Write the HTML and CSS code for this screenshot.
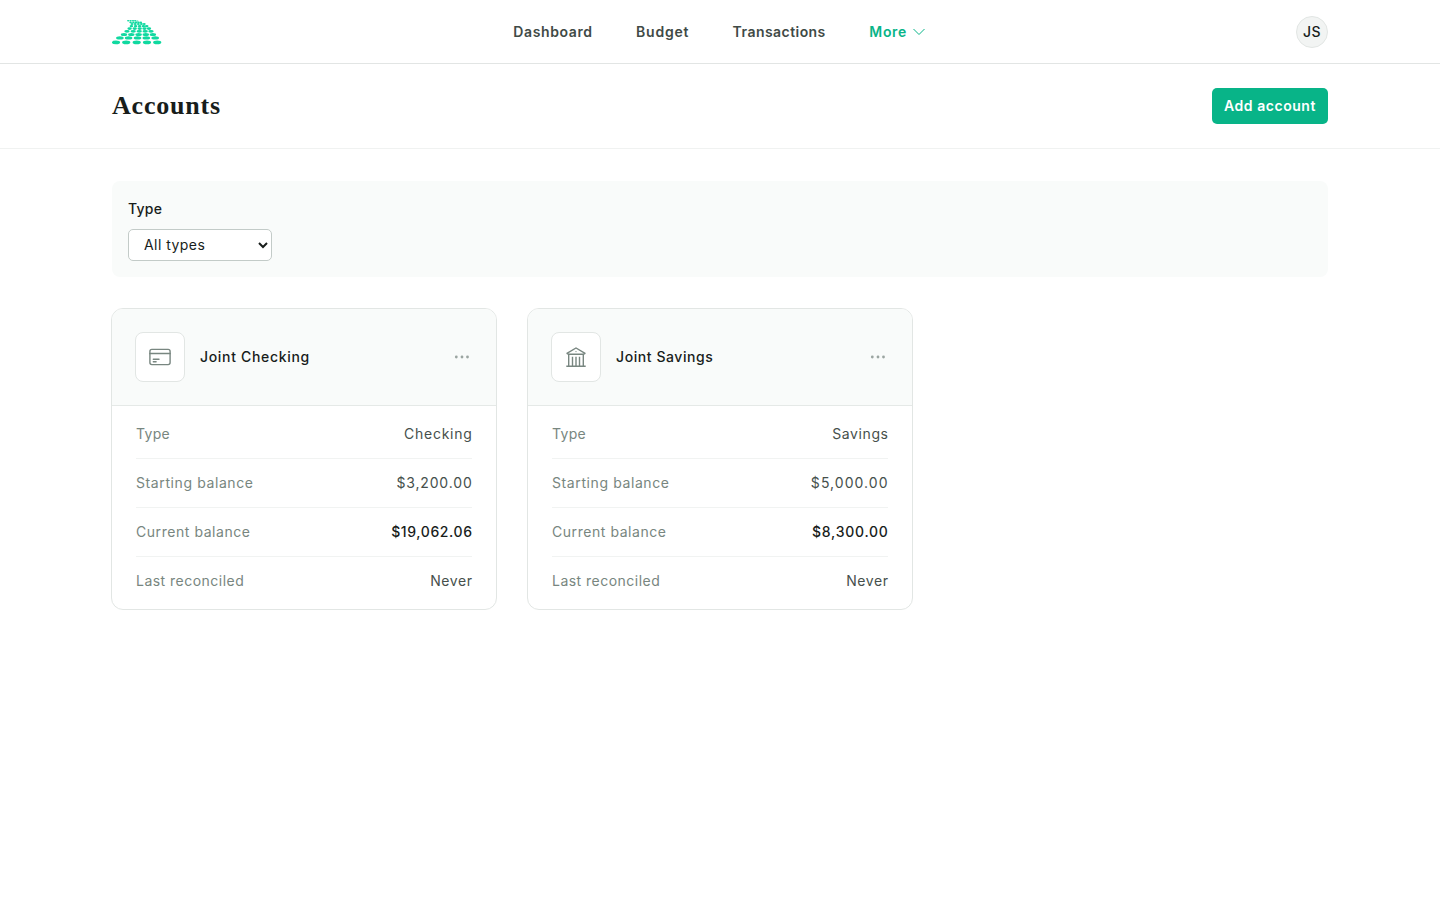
FILE: index.html
```html
<!DOCTYPE html>
<html lang="en">
<head>
<meta charset="utf-8">
<title>Accounts</title>
<link rel="stylesheet" href="styles.css">
</head>
<body>
<header class="topbar">
  <div class="container topbar-inner">
    <a class="logo" aria-label="Home">
      <svg width="50" height="26" viewBox="112 19 50 26" fill="#10d9a0">
        <g><ellipse cx="116" cy="42.4" rx="4.1" ry="1.8"/><ellipse cx="126.2" cy="42.4" rx="4.1" ry="1.8"/><ellipse cx="136.7" cy="42.4" rx="4.1" ry="1.8"/><ellipse cx="147" cy="42.4" rx="4.1" ry="1.8"/><ellipse cx="157.2" cy="42.4" rx="4.1" ry="1.8"/></g>
        <g><ellipse cx="119.9" cy="37.9" rx="3.8" ry="1.6"/><ellipse cx="128.6" cy="37.9" rx="3.8" ry="1.6"/><ellipse cx="137.5" cy="37.9" rx="3.8" ry="1.6"/><ellipse cx="146.3" cy="37.9" rx="3.8" ry="1.6"/><ellipse cx="155.2" cy="37.9" rx="3.8" ry="1.6"/></g>
        <g><ellipse cx="124" cy="34.4" rx="3.2" ry="1.5"/><ellipse cx="131.3" cy="34.4" rx="3.2" ry="1.5"/><ellipse cx="138.6" cy="34.4" rx="3.2" ry="1.5"/><ellipse cx="145.8" cy="34.4" rx="3.2" ry="1.5"/><ellipse cx="152.9" cy="34.4" rx="3.2" ry="1.5"/></g>
        <g><ellipse cx="127" cy="31.3" rx="2.7" ry="1.4"/><ellipse cx="133.2" cy="31.3" rx="2.7" ry="1.4"/><ellipse cx="139.2" cy="31.3" rx="2.7" ry="1.4"/><ellipse cx="145.2" cy="31.3" rx="2.7" ry="1.4"/><ellipse cx="151" cy="31.3" rx="2.7" ry="1.4"/></g>
        <g><ellipse cx="129.6" cy="28.6" rx="2.2" ry="1.3"/><ellipse cx="134.7" cy="28.6" rx="2.2" ry="1.3"/><ellipse cx="139.7" cy="28.6" rx="2.2" ry="1.3"/><ellipse cx="144.5" cy="28.6" rx="2.2" ry="1.3"/><ellipse cx="149" cy="28.6" rx="2.2" ry="1.3"/></g>
        <g><ellipse cx="131.4" cy="26.1" rx="1.8" ry="1.2"/><ellipse cx="135.6" cy="26.1" rx="1.8" ry="1.2"/><ellipse cx="139.6" cy="26.1" rx="1.8" ry="1.2"/><ellipse cx="143.4" cy="26.1" rx="1.8" ry="1.2"/><ellipse cx="146.7" cy="26.1" rx="1.8" ry="1.2"/></g>
        <g><ellipse cx="132" cy="24.1" rx="1.5" ry="1"/><ellipse cx="135.2" cy="24.1" rx="1.5" ry="1"/><ellipse cx="138.4" cy="24.1" rx="1.5" ry="1"/><ellipse cx="141.4" cy="24.1" rx="1.5" ry="1"/><ellipse cx="144.2" cy="24.1" rx="1.5" ry="1"/></g>
        <g><ellipse cx="130.6" cy="22.4" rx="1.3" ry=".8"/><ellipse cx="133.4" cy="22.4" rx="1.3" ry=".8"/><ellipse cx="136" cy="22.4" rx="1.3" ry=".8"/><ellipse cx="138.5" cy="22.4" rx="1.3" ry=".8"/><ellipse cx="140.8" cy="22.4" rx="1.3" ry=".8"/></g>
        <g><ellipse cx="128.2" cy="20.8" rx="1.2" ry=".7"/><ellipse cx="130.6" cy="20.8" rx="1.2" ry=".7"/><ellipse cx="133" cy="20.8" rx="1.2" ry=".7"/><ellipse cx="135.2" cy="20.8" rx="1.2" ry=".7"/><ellipse cx="137.4" cy="21" rx="1.1" ry=".6"/></g>
      </svg>
    </a>
    <nav class="nav">
      <a class="t-dash">Dashboard</a>
      <a class="t-budget">Budget</a>
      <a class="t-trans">Transactions</a>
      <a class="active"><span class="t-more">More</span><svg width="12" height="8" viewBox="0 0 12 8" fill="none" stroke="currentColor" stroke-width="1"><path d="M.5 1 6 6.5 11.5 1"/></svg></a>
    </nav>
    <div class="avatar"><span>JS</span></div>
  </div>
</header>
<section class="heading">
  <div class="container heading-inner">
    <h1>Accounts</h1>
    <button class="add"><span>Add account</span></button>
  </div>
</section>
<main class="container main">
  <div class="filters">
    <label class="filter-label" for="type"><span>Type</span></label>
    <select class="filter-select" id="type"><option>All types</option></select>
  </div>
  <div class="cards">
    <article class="card">
      <div class="card-head">
        <div class="card-icon">
          <svg width="24" height="24" viewBox="0 0 24 24" fill="none" stroke="currentColor" stroke-width="1.4" stroke-linecap="round" stroke-linejoin="round"><rect x="1.9" y="4.4" width="20.2" height="15.2" rx="2"/><path d="M2 8.500h20" stroke-width="1.700"/><path d="M5.300 14.200h5.700M5.300 16.800h2.800"/></svg>
        </div>
        <h2 class="t-jc">Joint Checking</h2>
        <svg class="dots" width="16" height="4" viewBox="0 0 16 4" fill="currentColor"><circle cx="2.3" cy="2" r="1.4"/><circle cx="8" cy="2" r="1.4"/><circle cx="13.5" cy="2" r="1.4"/></svg>
      </div>
      <dl class="rows">
        <div class="row"><dt class="t-type">Type</dt><dd class="t-checking">Checking</dd></div>
        <div class="row"><dt class="t-start">Starting balance</dt><dd class="t-money">$3,200.00</dd></div>
        <div class="row"><dt class="t-current">Current balance</dt><dd class="strong t-money1">$19,062.06</dd></div>
        <div class="row"><dt class="t-last">Last reconciled</dt><dd class="t-never">Never</dd></div>
      </dl>
    </article>
    <article class="card">
      <div class="card-head">
        <div class="card-icon">
          <svg width="24" height="24" viewBox="0 0 24 24" fill="none" stroke="currentColor" stroke-width="1.4"><path d="M2.500 8.600 12 3l9.500 5.600M3.500 9.300h17M4.700 9.300v11.700M19.300 9.300v11.700M8.500 11.800v9M12 11.800v9M15.500 11.800v9M2.300 21.200h19.400"/><circle cx="12" cy="6.700" r=".3" stroke-width=".7"/></svg>
        </div>
        <h2 class="t-js">Joint Savings</h2>
        <svg class="dots" width="16" height="4" viewBox="0 0 16 4" fill="currentColor"><circle cx="2.3" cy="2" r="1.4"/><circle cx="8" cy="2" r="1.4"/><circle cx="13.5" cy="2" r="1.4"/></svg>
      </div>
      <dl class="rows">
        <div class="row"><dt class="t-type">Type</dt><dd class="t-savings">Savings</dd></div>
        <div class="row"><dt class="t-start">Starting balance</dt><dd class="t-money t-five">$5,000.00</dd></div>
        <div class="row"><dt class="t-current">Current balance</dt><dd class="strong t-money2">$8,300.00</dd></div>
        <div class="row"><dt class="t-last">Last reconciled</dt><dd class="t-never">Never</dd></div>
      </dl>
    </article>
  </div>
</main>
</body>
</html>
```
FILE: styles.css
```css
* { box-sizing: border-box; }
body { margin: 0; background: #fff; color: #181d1b; font: 400 14px/24px Inter, "Liberation Sans", sans-serif; }
h1, h2, dl, dd { margin: 0; }
.container { width: 1216px; margin: 0 auto; }
.topbar { height: 64px; border-bottom: 1px solid #e2e5e4; }
.topbar-inner { display: grid; grid-template-columns: 1fr auto 1fr; align-items: center; height: 64px; }
.logo svg { display: block; }
.nav { display: flex; gap: 43.5px; padding-right: 1.6px; font-weight: 600; color: #3f4a46; }
.nav .active { display: flex; align-items: center; gap: 6px; color: #08b488; }
.avatar { justify-self: end; display: flex; align-items: center; justify-content: center; width: 32px; height: 32px; border: 1px solid #e2e6e4; border-radius: 50%; background: #f2f4f3; font-weight: 500; letter-spacing: .4px; }
.heading { height: 85px; border-bottom: 1px solid #f0f2f1; }
.heading-inner { display: flex; align-items: center; justify-content: space-between; height: 84px; }
h1 { font: 700 26px/32px "Liberation Serif", serif; letter-spacing: .8px; }
.add { width: 116px; height: 36px; padding: 0; border: 0; border-radius: 5px; background: #08b488; color: #fff; font: 600 14px/24px Inter, sans-serif; letter-spacing: .55px; white-space: nowrap; }
.main { padding-top: 32px; }
.filters { display: flex; flex-direction: column; align-items: flex-start; height: 96px; padding: 16px; border-radius: 8px; background: #f9fbfa; }
.filter-label { height: 32px; font-weight: 500; letter-spacing: .25px; }
.filter-select { width: 144px; height: 32px; padding: 0 0 2px 11px; border: 1px solid #c3cbc8; border-radius: 5px; background: #fff; color: #181d1b; font: 400 14px/24px Inter, sans-serif; letter-spacing: .45px; }
.cards { display: grid; grid-template-columns: repeat(3, 386px); gap: 30px; margin: 31px -1px 0; }
.card { height: 302px; border: 1px solid #e2e6e4; border-radius: 12px; overflow: hidden; }
.card-head { display: flex; align-items: center; height: 97px; padding: 0 26px 0 23px; border-bottom: 1px solid #e5e9e7; background: #f9fbfa; }
.card-icon { display: flex; align-items: center; justify-content: center; width: 50px; height: 50px; margin-right: 15px; border: 1px solid #e2e6e4; border-radius: 8px; background: #fff; color: #788680; }
.card-head h2 { font: 500 14px/24px Inter, sans-serif; }
.dots { margin-left: auto; color: #9ba5a1; }
.rows { padding: 4px 24px; }
.row { display: flex; justify-content: space-between; height: 49px; padding-top: 12px; border-bottom: 1px solid #f1f3f2; white-space: nowrap; }
.row:last-child { border: 0; }
.row dt { color: #788680; }
.row dd { margin-right: -.6px; color: #46504c; }
.row .strong { color: #181d1b; font-weight: 500; }

/* Tracking per label */
.t-dash { letter-spacing: .6px; }
.t-budget { letter-spacing: .75px; }
.t-trans { letter-spacing: .45px; }
.t-more { letter-spacing: .7px; }
.card-head .t-jc { letter-spacing: .68px; }
.card-head .t-js { letter-spacing: .58px; }
.t-type { letter-spacing: .3px; }
.t-start { letter-spacing: .6px; }
.t-current { letter-spacing: .55px; }
.t-last { letter-spacing: .48px; }
.t-checking { letter-spacing: .75px; }
.t-savings { letter-spacing: .6px; }
.t-money { letter-spacing: .85px; }
.t-five { letter-spacing: 1.05px; }
.t-money1 { letter-spacing: .6px; }
.t-money2 { letter-spacing: .75px; }
.t-never { letter-spacing: .6px; }
```
